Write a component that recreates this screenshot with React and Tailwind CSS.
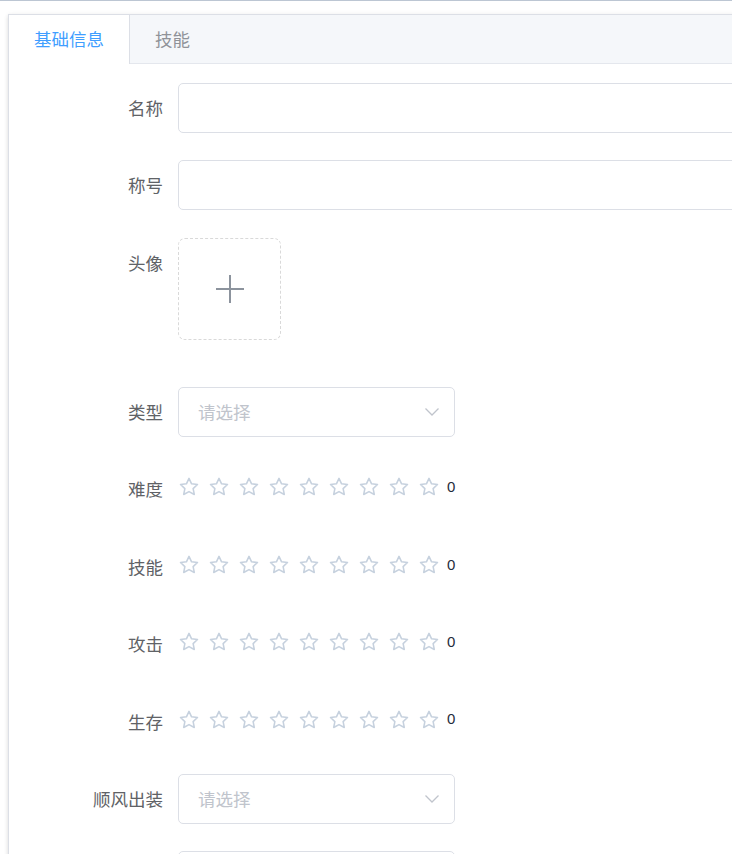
const font = { fontFamily: '"Noto Sans CJK SC", "Noto Sans", sans-serif' };

function Star() {
  return (
    <svg width="22" height="22" viewBox="0 0 24 24" className="mr-[8px] shrink-0">
      <path
        d="M12 2.6l2.8 5.95 6.45.75-4.75 4.45 1.27 6.4L12 17.05l-5.77 3.1 1.27-6.4-4.75-4.45 6.45-.75z"
        fill="none"
        stroke="#C6D1DE"
        strokeWidth="1.7"
        strokeLinejoin="round"
      />
    </svg>
  );
}

function Chevron() {
  return (
    <svg width="16" height="10" viewBox="0 0 16 10" className="mr-[14px]">
      <polyline points="1.5,1.5 8,8 14.5,1.5" fill="none" stroke="#C0C4CC" strokeWidth="1.3" />
    </svg>
  );
}

function Item({ label, children, className = "mb-[27.4px]" }) {
  return (
    <div className={`flex items-start ${className}`}>
      <div className="w-[150px] shrink-0 pr-[15px] text-right text-[17.5px] leading-[50px] text-[#606266]">
        {label}
      </div>
      <div className="flex-1 min-w-0">{children}</div>
    </div>
  );
}

function TextInput() {
  return <div className="h-[50px] w-full rounded-[5px] border border-[#DCDFE6] bg-white" />;
}

function Select({ placeholder = "请选择" }) {
  return (
    <div className="flex h-[50px] w-[277px] items-center justify-between rounded-[5px] border border-[#DCDFE6] bg-white pl-[19px]">
      <span className="text-[17.5px] text-[#C0C4CC]">{placeholder}</span>
      <Chevron />
    </div>
  );
}

function Rate() {
  return (
    <div className="flex h-[50px] items-center">
      <div className="flex items-center -mt-[4px]">
        {[0, 1, 2, 3, 4, 5, 6, 7, 8].map((i) => (
          <Star key={i} />
        ))}
        <span className="-ml-[1px] text-[15px] text-[#1F2D3D]" style={{ fontFamily: '"Liberation Sans", sans-serif' }}>
          0
        </span>
      </div>
    </div>
  );
}

export default function App() {
  return (
    <div className="h-[854px] w-full overflow-hidden bg-white" style={font}>
      <div className="h-px bg-[#BCC6D3]" />
      <div className="mt-[13px] ml-2 mr-[-60px] border border-[#DCDFE6] bg-white shadow-[0_2px_4px_rgba(0,0,0,0.12),0_0_6px_rgba(0,0,0,0.04)]">
        <div className="flex h-[49px] border-b border-[#E4E7ED] bg-[#F5F7FA]">
          <div className="-mb-px flex h-[49px] items-center border-r border-[#DCDFE6] bg-white px-[25px] text-[17.5px] text-[#409EFF]">
            基础信息
          </div>
          <div className="flex h-[48px] items-center px-[25px] text-[17.5px] text-[#909399]">技能</div>
        </div>
        <div className="px-[19px] pt-[19px] pb-4">
          <Item label="名称" className="mb-[27px]">
            <TextInput />
          </Item>
          <Item label="称号" className="mb-[28px]">
            <TextInput />
          </Item>
          <Item label="头像" className="mb-[47px]">
            <div className="flex h-[102px] w-[103px] items-center justify-center rounded-[7px] border border-dashed border-[#D9D9D9]">
              <svg width="32" height="32" viewBox="0 0 32 32">
                <path d="M16 2v28M2 16h28" stroke="#8C939D" strokeWidth="2" />
              </svg>
            </div>
          </Item>
          <Item label="类型">
            <Select />
          </Item>
          <Item label="难度">
            <Rate />
          </Item>
          <Item label="技能">
            <Rate />
          </Item>
          <Item label="攻击">
            <Rate />
          </Item>
          <Item label="生存">
            <Rate />
          </Item>
          <Item label="顺风出装">
            <Select />
          </Item>
          <Item label="">
            <Select placeholder="" />
          </Item>
        </div>
      </div>
    </div>
  );
}
